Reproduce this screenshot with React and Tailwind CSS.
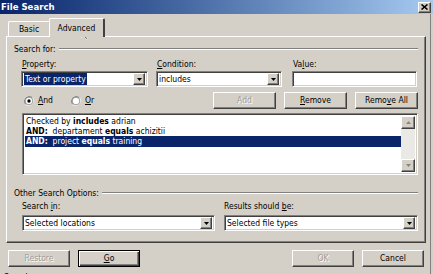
import React from "react";

const raised =
  "border border-t-white border-l-white border-b-[#404040] border-r-[#404040] shadow-[inset_-1px_-1px_#808080]";
const sunken =
  "border border-t-[#808080] border-l-[#808080] border-b-white border-r-white shadow-[inset_1px_1px_#404040,inset_-1px_-1px_#d4d0c8]";

function U({ children }) {
  return <span className="underline underline-offset-[1px]">{children}</span>;
}

function DropBtn() {
  return (
    <div className={`w-[12px] h-[12px] bg-[#d4d0c8] flex items-center justify-center ${raised}`}>
      <svg width="5" height="3" viewBox="0 0 5 3">
        <path d="M0 0h5L2.5 3z" fill="#000" />
      </svg>
    </div>
  );
}

function Select({ w, children }) {
  return (
    <div className={`h-[16px] bg-white flex items-center justify-between pl-[2px] pr-[2px] ${sunken} ${w}`}>
      <div className="flex items-center leading-none">{children}</div>
      <DropBtn />
    </div>
  );
}

function Btn({ w, children, disabled, def }) {
  return (
    <div
      className={`h-[17px] flex items-center justify-center leading-none ${w} ${
        def
          ? "border border-black shadow-[inset_1px_1px_white,inset_-1px_-1px_#404040,inset_-2px_-2px_#808080]"
          : raised
      } ${disabled ? "text-[#a09d97] [text-shadow:1px_1px_0_#fff]" : ""}`}
    >
      {children}
    </div>
  );
}

function Radio({ checked }) {
  return (
    <svg width="10" height="10" viewBox="0 0 12 12">
      <path d="M10.2 1.8A6 6 0 0 0 1.8 10.2" stroke="#808080" strokeWidth="1" fill="none" />
      <path d="M1.8 10.2A6 6 0 0 0 10.2 1.8" stroke="#fff" strokeWidth="1" fill="none" />
      <circle cx="6" cy="6" r="4.6" fill="#fff" stroke="#404040" strokeWidth="0.6" />
      {checked && <circle cx="6" cy="6" r="2" fill="#000" />}
    </svg>
  );
}

function GroupLabel({ text }) {
  return (
    <div className="h-[10px] flex items-center pl-[7px] pr-[7px]">
      <span className="leading-none whitespace-nowrap">{text}</span>
      <div className="flex-1 ml-[3px] h-[2px] border-t border-t-[#808080] border-b border-b-white" />
    </div>
  );
}

export default function App() {
  return (
    <div className="w-[433px] h-[274px] overflow-hidden relative bg-[#d4d0c8] text-black text-[8.5px] font-['DejaVu_Sans_Condensed','Liberation_Sans',sans-serif]">
      {/* Title bar */}
      <div className="h-[14px] flex items-center justify-between bg-linear-to-r from-[#0a246a] to-[#a6caf0] pl-[1px] pr-[2px]">
        <span className="text-white font-bold text-[9.5px] leading-none">File Search</span>
        <div className={`w-[13px] h-[11px] bg-[#d4d0c8] flex items-center justify-center ${raised}`}>
          <svg width="7" height="6" viewBox="0 0 7 6">
            <path d="M0.5 0.5L6.5 5.5M6.5 0.5L0.5 5.5" stroke="#000" strokeWidth="1.6" />
          </svg>
        </div>
      </div>

      <div className="w-[431px] h-[260px] border-r border-r-[#808080]">
        {/* Tabs */}
        <div className="h-[22px] flex items-end pl-[8px]">
          <div className="w-[42px] h-[15px] flex items-center justify-center border-t border-t-white border-l border-l-white border-r border-r-[#404040] rounded-t-[2px]">
            Basic
          </div>
          <div className="relative z-10 w-[56px] h-[19px] -mb-[1px] -ml-[1px] bg-[#d4d0c8] flex items-start pt-[3px] justify-center border-t border-t-white border-l border-l-white border-r-2 border-r-[#404040] rounded-t-[2px]">
            Advanced
          </div>
        </div>

        {/* Panel */}
        <div className="ml-[6px] w-[420px] h-[207px] border border-t-white border-l-white border-b-[#404040] border-r-[#404040] shadow-[inset_-1px_-1px_#808080] flex flex-col">
          <div className="mt-[7px]">
            <GroupLabel text="Search for:" />
          </div>

          <div className="pl-[14px] flex mt-[5px] h-[10px] items-center leading-none">
            <div className="w-[135px] pl-[1px]">
              <U>P</U>roperty:
            </div>
            <div className="w-[136px] pl-[1px]">
              <U>C</U>ondition:
            </div>
            <div className="pl-[1px]">
              Va<U>l</U>ue:
            </div>
          </div>

          <div className="pl-[14px] flex mt-[2px]">
            <Select w="w-[127px]">
              <span className="bg-[#0a246a] text-white px-[1px] py-[2px] leading-none">Text or property</span>
            </Select>
            <div className="w-[8px]" />
            <Select w="w-[126px]">
              <span>includes</span>
            </Select>
            <div className="w-[10px]" />
            <div className={`w-[125px] h-[16px] bg-white ${sunken}`} />
          </div>

          <div className="pl-[17px] pr-[7px] flex items-center mt-[5px] h-[17px]">
            <div className="flex items-center gap-[4px]">
              <Radio checked />
              <span className="leading-none">
                <U>A</U>nd
              </span>
            </div>
            <div className="flex items-center gap-[4px] ml-[18px]">
              <Radio />
              <span className="leading-none">
                <U>O</U>r
              </span>
            </div>
            <div className="flex-1" />
            <Btn w="w-[63px]" disabled>
              Add
            </Btn>
            <div className="w-[8px]" />
            <Btn w="w-[63px]">
              <span>
                <U>R</U>emove
              </span>
            </Btn>
            <div className="w-[8px]" />
            <Btn w="w-[63px]">
              <span>
                Remo<U>v</U>e All
              </span>
            </Btn>
          </div>

          <div className="pl-[15px] mt-[4px]">
            <div className={`w-[396px] h-[62px] bg-white flex p-[2px] ${sunken}`}>
              <div className="flex-1 flex flex-col leading-none">
                <div className="h-[10px] flex items-center pl-[1px]">
                  Checked by&nbsp;<b>includes</b>&nbsp;adrian
                </div>
                <div className="h-[10px] flex items-center pl-[1px]">
                  <b>AND:</b>&nbsp;&nbsp;departament&nbsp;<b>equals</b>&nbsp;achizitii
                </div>
                <div className="h-[11px] flex items-center pl-[1px] bg-[#0a246a] text-white">
                  <b>AND:</b>&nbsp;&nbsp;project&nbsp;<b>equals</b>&nbsp;training
                </div>
              </div>
              <div className="w-[14px] flex flex-col bg-[#ebe9e5]">
                <div className={`h-[13px] bg-[#d4d0c8] flex items-center justify-center ${raised}`}>
                  <svg width="5" height="3" viewBox="0 0 5 3">
                    <path d="M0 3h5L2.5 0z" fill="#8a8780" />
                  </svg>
                </div>
                <div className="flex-1" />
                <div className={`h-[13px] bg-[#d4d0c8] flex items-center justify-center ${raised}`}>
                  <svg width="5" height="3" viewBox="0 0 5 3">
                    <path d="M0 0h5L2.5 3z" fill="#8a8780" />
                  </svg>
                </div>
              </div>
            </div>
          </div>

          <div className="mt-[13px]">
            <GroupLabel text="Other Search Options:" />
          </div>

          <div className="pl-[15px] flex mt-[3px] h-[10px] items-center leading-none">
            <div className="w-[202px]">
              Search <U>i</U>n:
            </div>
            <div>
              Results should <U>b</U>e:
            </div>
          </div>

          <div className="pl-[15px] flex mt-[4px]">
            <Select w="w-[193px]">
              <span>Selected locations</span>
            </Select>
            <div className="w-[9px]" />
            <Select w="w-[194px]">
              <span>Selected file types</span>
            </Select>
          </div>
        </div>

        {/* Bottom buttons */}
        <div className="flex mt-[7px] pl-[8px] pr-[6px]">
          <Btn w="w-[62px]" disabled>
            Restore
          </Btn>
          <div className="w-[8px]" />
          <Btn w="w-[62px]" def>
            <span>
              <U>G</U>o
            </span>
          </Btn>
          <div className="flex-1" />
          <Btn w="w-[62px]" disabled>
            OK
          </Btn>
          <div className="w-[8px]" />
          <Btn w="w-[62px]">Cancel</Btn>
        </div>
      </div>
      <div className="pl-[4px] -mt-[1px] leading-none">Search</div>

      {/* cursor */}
      <svg className="absolute left-[81px] top-[27px] pointer-events-none" width="8" height="13" viewBox="0 0 8 13">
        <path d="M0.5 0.5V10.5L3 8.2L4.8 12.3L6.2 11.7L4.5 7.8H7.5Z" fill="#000" stroke="#fff" strokeWidth="0.8" />
      </svg>
    </div>
  );
}
